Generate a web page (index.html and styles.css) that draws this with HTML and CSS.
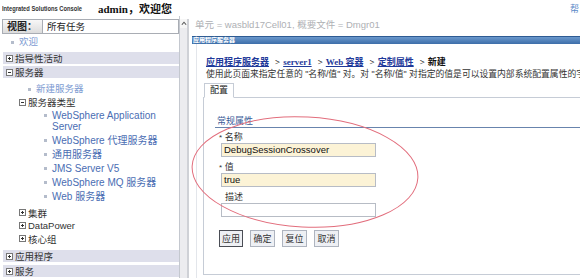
FILE: index.html
```html
<!DOCTYPE html>
<html lang="zh-CN">
<head>
  <meta charset="UTF-8" />
  <title>Integrated Solutions Console</title>
  <link rel="stylesheet" href="styles.css">
</head>
<body>
  <div class="header">
    <span class="brand">Integrated Solutions Console</span>
    <span class="welcome">admin，欢迎您</span>
    <span class="help">帮</span>
  </div>

  <div class="main">
    <!-- Navigation tree -->
    <div class="nav">
      <div class="tree">
        <div class="view-row">
          <span class="view-label">视图：</span>
          <span class="view-select">所有任务</span>
        </div>

        <div class="tree-link top"><span class="dot"></span>欢迎</div>

        <div class="group-bar first">
          <svg class="toggle" viewBox="0 0 7 7"><rect x="0.5" y="0.5" width="6" height="6"/><path d="M2 3.5h3M3.5 2v3"/></svg>指导性活动
        </div>
        <div class="group-bar">
          <svg class="toggle" viewBox="0 0 7 7"><rect x="0.5" y="0.5" width="6" height="6"/><path d="M2 3.5h3"/></svg>服务器
        </div>

        <div class="tree-link lvl2"><span class="dot"></span>新建服务器</div>
        <div class="node">
          <svg class="toggle" viewBox="0 0 7 7"><rect x="0.5" y="0.5" width="6" height="6"/><path d="M2 3.5h3"/></svg>服务器类型
        </div>
        <ul class="leaves">
          <li><span class="dot"></span><span>WebSphere Application Server</span></li>
          <li><span class="dot"></span><span>WebSphere 代理服务器</span></li>
          <li><span class="dot"></span><span>通用服务器</span></li>
          <li><span class="dot"></span><span>JMS Server V5</span></li>
          <li><span class="dot"></span><span>WebSphere MQ 服务器</span></li>
          <li><span class="dot"></span><span>Web 服务器</span></li>
        </ul>
        <div class="node closed first-closed">
          <svg class="toggle" viewBox="0 0 7 7"><rect x="0.5" y="0.5" width="6" height="6"/><path d="M2 3.5h3M3.5 2v3"/></svg>集群
        </div>
        <div class="node closed">
          <svg class="toggle" viewBox="0 0 7 7"><rect x="0.5" y="0.5" width="6" height="6"/><path d="M2 3.5h3M3.5 2v3"/></svg>DataPower
        </div>
        <div class="node closed">
          <svg class="toggle" viewBox="0 0 7 7"><rect x="0.5" y="0.5" width="6" height="6"/><path d="M2 3.5h3M3.5 2v3"/></svg>核心组
        </div>

        <div class="group-bar after-nodes">
          <svg class="toggle" viewBox="0 0 7 7"><rect x="0.5" y="0.5" width="6" height="6"/><path d="M2 3.5h3M3.5 2v3"/></svg>应用程序
        </div>
        <div class="group-bar last">
          <svg class="toggle" viewBox="0 0 7 7"><rect x="0.5" y="0.5" width="6" height="6"/><path d="M2 3.5h3M3.5 2v3"/></svg>服务
        </div>
      </div>
      <div class="scrollbar">
        <div class="scroll-up">
          <svg viewBox="0 0 7 5"><path d="M1 4l2.5-3 2.5 3"/></svg>
        </div>
      </div>
    </div>

    <!-- Work area -->
    <div class="work">
      <div class="context">单元 = wasbld17Cell01, 概要文件 = Dmgr01</div>
      <div class="title-bar">应用程序服务器</div>
      <div class="panel">
        <div class="crumbs">
          <a href="#">应用程序服务器</a><span class="sep">&gt;</span><a href="#">server1</a><span class="sep">&gt;</span><a href="#">Web 容器</a><span class="sep">&gt;</span><a href="#">定制属性</a><span class="sep">&gt;</span>新建
        </div>
        <div class="desc">使用此页面来指定任意的 "名称/值" 对。对 "名称/值" 对指定的值是可以设置内部系统配置属性的字符串。</div>
        <div class="tabs"><span class="tab">配置</span></div>
        <div class="tab-body">
          <div class="section-title">常规属性</div>
          <div class="fields">
            <div class="field-label"><span class="req">*</span> 名称</div>
            <div class="input required">DebugSessionCrossover</div>
            <div class="field-label"><span class="req">*</span> 值</div>
            <div class="input required">true</div>
            <div class="field-label plain">描述</div>
            <div class="input"></div>
          </div>
          <div class="buttons">
            <button class="btn focused">应用</button>
            <button class="btn">确定</button>
            <button class="btn">复位</button>
            <button class="btn">取消</button>
          </div>
        </div>
      </div>
    </div>
  </div>

  <!-- hand-drawn annotation -->
  <svg class="annotation" viewBox="0 0 580 278">
    <ellipse cx="305" cy="172" rx="113" ry="55" transform="rotate(3 305 172)"/>
  </svg>
</body>
</html>
```

FILE: styles.css
```css
/* Global */
body {
  margin: 0;
  width: 580px;
  height: 278px;
  overflow: hidden;
  position: relative;
  background: #fff;
  font-family: "Liberation Sans", "Noto Sans CJK SC", sans-serif;
  font-size: 10px;
  color: #222;
}
/* Header */
.header {
  height: 16px;
  display: flex;
  align-items: center;
  white-space: nowrap;
}
.brand {
  display: inline-block;
  width: 118px;
  margin-left: 2px;
  font-size: 8px;
  font-weight: bold;
  color: #333;
  transform: scaleX(0.72);
  transform-origin: left center;
  margin-right: -22px;
}
.welcome {
  font-family: "Liberation Serif", "Noto Sans CJK SC", serif;
  font-weight: bold;
  font-size: 11px;
  color: #111;
}
.help {
  margin-left: auto;
  margin-right: 1px;
  color: #5b8ac8;
  font-size: 9px;
}
/* Layout */
.main {
  display: flex;
  height: 262px;
}
.nav {
  display: flex;
  width: 189px;
  flex: 0 0 189px;
}
.tree {
  width: 176px;
  padding: 0 0 0 3px;
  border-right: 1px solid #c4c8cf;
}
.scrollbar {
  width: 7px;
  margin-top: 3px;
  background: #ececef;
  border-right: 2px solid #cfd1d6;
}
.scroll-up {
  height: 9px;
  display: flex;
  align-items: center;
  justify-content: center;
  background: #f6f6f6;
}
.scroll-up svg {
  width: 6px;
  height: 5px;
  fill: none;
  stroke: #555;
  stroke-width: 1.2;
}
/* View selector */
.view-row {
  display: flex;
  height: 15px;
  margin-top: 3px;
  margin-left: -1px;
}
.view-label {
  width: 35px;
  border: 1px solid #a9adb4;
  background: linear-gradient(#f7f7f7, #dcdcdc);
  font-weight: bold;
  font-size: 10px;
  line-height: 13px;
  padding-left: 4px;
  white-space: nowrap;
  overflow: hidden;
}
.view-select {
  flex: 1;
  border: 1px solid #a9adb4;
  border-left: none;
  line-height: 13px;
  padding-left: 4px;
  font-size: 9.5px;
  color: #222;
}
/* Tree */
.dot {
  display: inline-block;
  width: 3px;
  height: 3px;
  background: #b4bccb;
  margin-right: 5px;
  vertical-align: middle;
  flex: 0 0 3px;
}
.tree-link {
  line-height: 12px;
  font-size: 9.5px;
  color: #7d9bd2;
  white-space: nowrap;
}
.tree-link.top {
  margin-top: 2px;
  padding-left: 8px;
}
.tree-link.lvl2 {
  margin-top: 5px;
  padding-left: 25px;
}
.toggle {
  width: 7px;
  height: 7px;
  margin-right: 2px;
  flex: 0 0 7px;
}
.toggle rect {
  fill: #fff;
  stroke: #777;
  stroke-width: 1;
}
.toggle path {
  stroke: #333;
  stroke-width: 1;
  fill: none;
}
.group-bar {
  display: flex;
  align-items: center;
  height: 12px;
  margin-top: 2px;
  padding-left: 3px;
  background: #dedfeb;
  font-size: 9.5px;
  color: #333;
}
.group-bar.first {
  margin-top: 4px;
}
.group-bar.after-nodes {
  margin-top: 5px;
}
.group-bar.last {
  margin-top: 3px;
}
.node {
  display: flex;
  align-items: center;
  height: 12px;
  margin-top: 1px;
  padding-left: 16px;
  font-size: 9.5px;
  color: #333;
}
.node.closed {
  height: 13px;
  margin-top: 0;
}
.node.first-closed {
  margin-top: 4px;
}
.leaves {
  list-style: none;
  margin: 2px 0 0;
  padding: 0 0 0 41px;
}
.leaves li {
  display: flex;
  align-items: baseline;
  line-height: 11px;
  font-size: 10px;
  color: #4a6db3;
  margin-bottom: 3px;
}
.leaves li .dot {
  position: relative;
  top: -2px;
}
/* Work area */
.work {
  flex: 1;
  margin-left: 3px;
  min-width: 0;
}
.context {
  height: 17px;
  line-height: 17px;
  padding-left: 3px;
  font-size: 9.5px;
  color: #aeb0b4;
  white-space: nowrap;
}
.title-bar {
  margin-top: 3px;
  height: 7px;
  border-top: 1px solid #2e5b93;
  background: linear-gradient(#6a98cc, #3d6ea9);
  color: #fff;
  font-size: 6px;
  font-weight: bold;
  line-height: 7px;
  padding-left: 1px;
  white-space: nowrap;
}
.panel {
  margin-left: 4px;
  height: 222px;
  border-left: 1px solid #e3e6eb;
  padding: 12px 0 0 6px;
  white-space: nowrap;
  overflow: hidden;
}
.crumbs {
  line-height: 12px;
  padding-left: 3px;
  font-family: "Liberation Serif", "Noto Sans CJK SC", serif;
  font-weight: bold;
  font-size: 9px;
  color: #111;
}
.crumbs a {
  color: #1f3a9a;
  text-decoration: underline;
}
.crumbs .sep {
  margin: 0 3px 0 6px;
}
.desc {
  line-height: 12px;
  padding-left: 3px;
  font-size: 8.8px;
  color: #333;
}
.tabs {
  margin-top: 3px;
  display: flex;
  padding-left: 1px;
}
.tab {
  height: 13px;
  line-height: 13px;
  padding: 0 5px;
  border: 1px solid #c6ccd6;
  border-bottom: 1px solid #fff;
  background: #fff;
  font-size: 9px;
  margin-bottom: -1px;
  position: relative;
}
.tab-body {
  height: 158px;
  border: 1px solid #c6ccd6;
  border-right: none;
  padding: 18px 0 0 11px;
}
.section-title {
  line-height: 11px;
  font-size: 9px;
  color: #3b5c98;
  border-bottom: 1px solid #6884ad;
  padding-left: 2px;
}
.fields {
  padding-left: 4px;
  margin-top: 4px;
}
.field-label {
  line-height: 11px;
  font-size: 9px;
  color: #333;
}
.field-label + .input + .field-label {
  margin-top: 5px;
}
.req {
  font-size: 8px;
}
.field-label.plain {
  padding-left: 6px;
}
.input {
  width: 151px;
  height: 12px;
  margin-left: 2px;
  border: 1px solid #b7bcc5;
  background: #fff;
  font-size: 9.5px;
  line-height: 12px;
  padding: 0 0 0 2px;
  color: #111;
}
.input.required {
  background: #fcf3d6;
}
.buttons {
  display: flex;
  gap: 7px;
  margin-top: 13px;
  padding-left: 4px;
}
.btn {
  height: 17px;
  width: 25px;
  padding: 0;
  border: 1px solid #aeb4bf;
  background: #eef0f4;
  font-family: "Noto Sans CJK SC", sans-serif;
  font-size: 9px;
  color: #333;
}
.btn.focused {
  border: 1px solid #4a4d55;
  width: 24px;
}
/* Annotation */
.annotation {
  position: absolute;
  left: 0;
  top: 0;
  width: 580px;
  height: 278px;
  pointer-events: none;
}
.annotation ellipse {
  fill: none;
  stroke: #e26d7c;
  stroke-width: 1;
}
```
